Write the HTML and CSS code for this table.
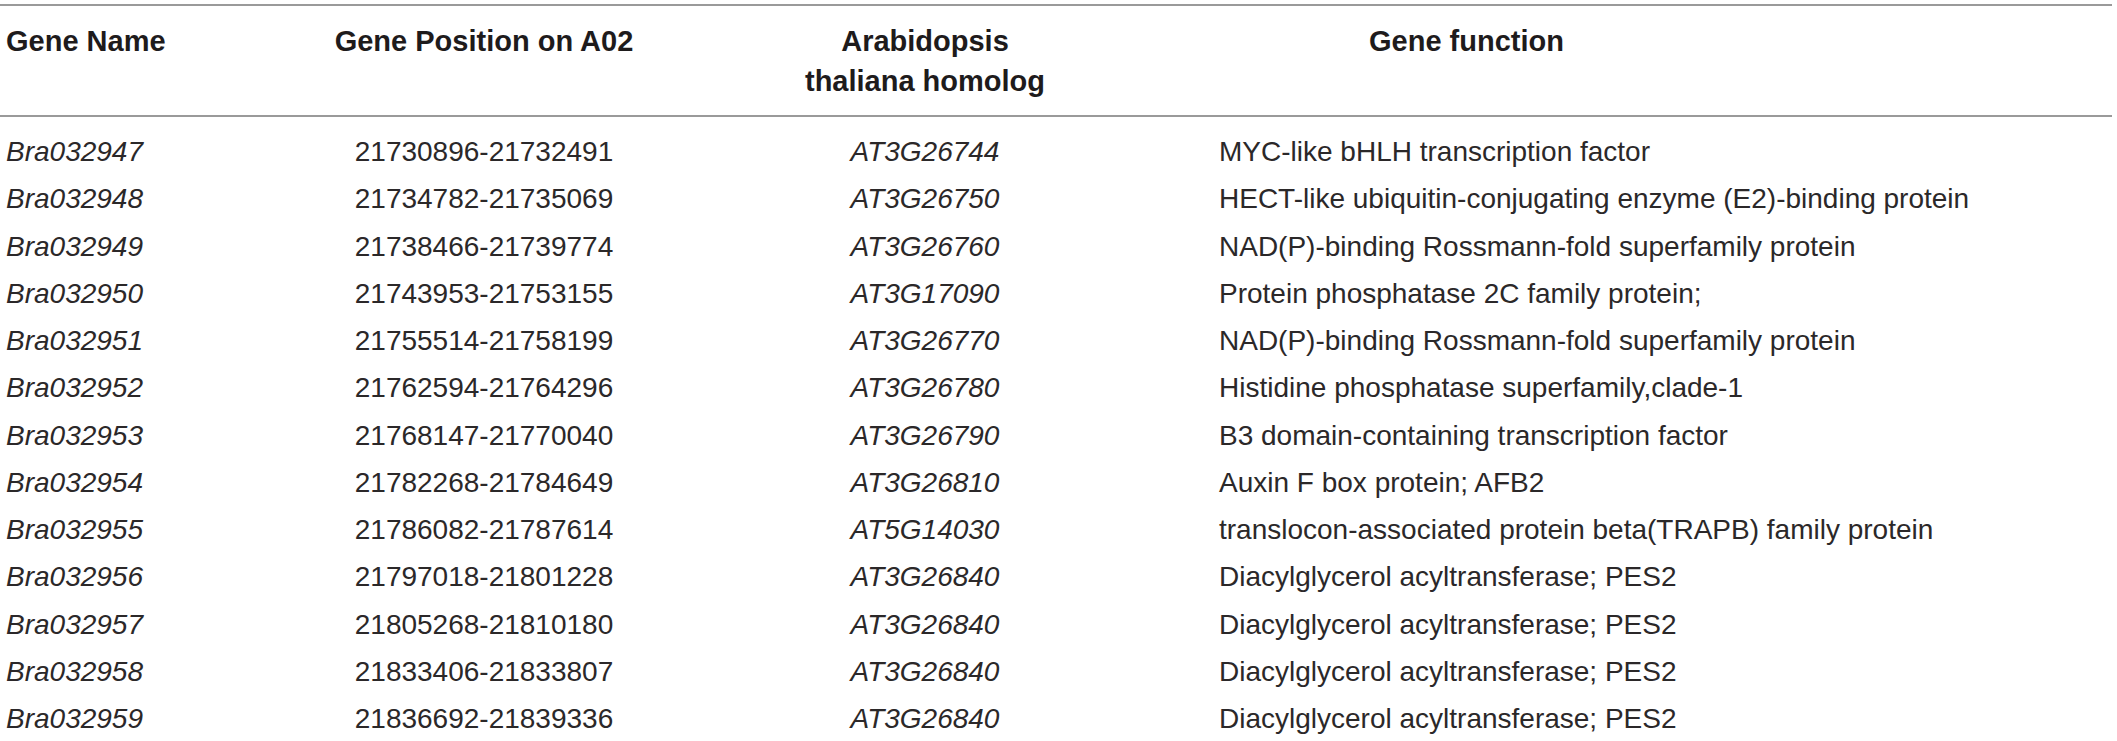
FILE: index.html
```html
<!DOCTYPE html>
<html lang="en">
<head>
<meta charset="utf-8">
<title>Genes on A02</title>
<link rel="stylesheet" href="styles.css">
</head>
<body>
<table class="genes">
  <colgroup>
    <col class="c-name">
    <col class="c-pos">
    <col class="c-homolog">
    <col class="c-func">
  </colgroup>
  <thead>
    <tr>
      <th class="left">Gene Name</th>
      <th class="center">Gene Position on A02</th>
      <th class="center">Arabidopsis<br>thaliana homolog</th>
      <th class="func-head">Gene function</th>
    </tr>
  </thead>
  <tbody>
    <tr><td class="left it">Bra032947</td><td class="center">21730896-21732491</td><td class="center it">AT3G26744</td><td class="left">MYC-like bHLH transcription factor</td></tr>
    <tr><td class="left it">Bra032948</td><td class="center">21734782-21735069</td><td class="center it">AT3G26750</td><td class="left">HECT-like ubiquitin-conjugating enzyme (E2)-binding protein</td></tr>
    <tr><td class="left it">Bra032949</td><td class="center">21738466-21739774</td><td class="center it">AT3G26760</td><td class="left">NAD(P)-binding Rossmann-fold superfamily protein</td></tr>
    <tr><td class="left it">Bra032950</td><td class="center">21743953-21753155</td><td class="center it">AT3G17090</td><td class="left">Protein phosphatase 2C family protein;</td></tr>
    <tr><td class="left it">Bra032951</td><td class="center">21755514-21758199</td><td class="center it">AT3G26770</td><td class="left">NAD(P)-binding Rossmann-fold superfamily protein</td></tr>
    <tr><td class="left it">Bra032952</td><td class="center">21762594-21764296</td><td class="center it">AT3G26780</td><td class="left">Histidine phosphatase superfamily,clade-1</td></tr>
    <tr><td class="left it">Bra032953</td><td class="center">21768147-21770040</td><td class="center it">AT3G26790</td><td class="left">B3 domain-containing transcription factor</td></tr>
    <tr><td class="left it">Bra032954</td><td class="center">21782268-21784649</td><td class="center it">AT3G26810</td><td class="left">Auxin F box protein; AFB2</td></tr>
    <tr><td class="left it">Bra032955</td><td class="center">21786082-21787614</td><td class="center it">AT5G14030</td><td class="left">translocon-associated protein beta(TRAPB) family protein</td></tr>
    <tr><td class="left it">Bra032956</td><td class="center">21797018-21801228</td><td class="center it">AT3G26840</td><td class="left">Diacylglycerol acyltransferase; PES2</td></tr>
    <tr><td class="left it">Bra032957</td><td class="center">21805268-21810180</td><td class="center it">AT3G26840</td><td class="left">Diacylglycerol acyltransferase; PES2</td></tr>
    <tr><td class="left it">Bra032958</td><td class="center">21833406-21833807</td><td class="center it">AT3G26840</td><td class="left">Diacylglycerol acyltransferase; PES2</td></tr>
    <tr><td class="left it">Bra032959</td><td class="center">21836692-21839336</td><td class="center it">AT3G26840</td><td class="left">Diacylglycerol acyltransferase; PES2</td></tr>
  </tbody>
</table>
</body>
</html>
```

FILE: styles.css
```css
html, body {
  margin: 0;
  padding: 0;
  background: #ffffff;
  overflow: hidden;
}

body {
  padding-top: 4px;
  font-family: "Liberation Sans", Arial, sans-serif;
  color: #231f20;
}

.genes {
  width: 2112px;
  table-layout: fixed;
  border-collapse: collapse;
  border-top: 2px solid #9a9a9a;
}

.c-name { width: 331px; }
.c-pos { width: 306px; }
.c-homolog { width: 576px; }
.c-func { width: 899px; }

.genes th {
  font-size: 29px;
  font-weight: bold;
  line-height: 40px;
  vertical-align: top;
  padding: 15px 0 14px 0;
  border-bottom: 2px solid #9a9a9a;
  color: #1e1b1c;
  white-space: nowrap;
}

.genes th.left {
  padding-left: 6px;
}

.genes td {
  font-size: 28px;
  font-weight: normal;
  line-height: 47.25px;
  padding: 0 6px;
  white-space: nowrap;
  color: #2b2829;
}

.genes tbody tr:first-child td {
  padding-top: 11px;
}

.left { text-align: left; }
.center { text-align: center; }
.it { font-style: italic; }

.genes th.func-head {
  text-align: left;
  padding-left: 156px;
}
```
